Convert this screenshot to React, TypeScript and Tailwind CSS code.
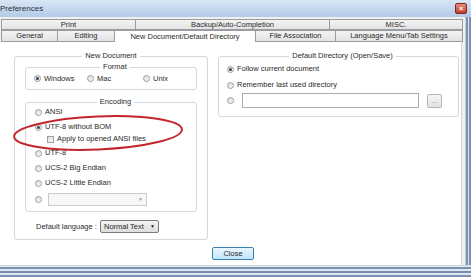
import type { ReactNode } from 'react';

const Radio = ({ checked }: { checked?: boolean }) => (
  <span className="w-[7px] h-[7px] rounded-full border border-[#9a9da1] bg-linear-to-br from-[#d8d8d8] to-[#fbfbfb] flex items-center justify-center shrink-0">
    {checked && <span className="w-[3px] h-[3px] rounded-full bg-[#34455a]" />}
  </span>
);

const Check = () => (
  <span className="w-[7px] h-[7px] border border-[#9a9da1] bg-linear-to-br from-[#dcdcdc] to-[#fbfbfb] shrink-0" />
);

function Group({ title, className, children }: { title: string; className?: string; children: ReactNode }) {
  return (
    <fieldset className={`border border-[#d3d8dd] rounded-[3px] ${className ?? ''}`}>
      <legend className="mx-auto px-[3px] leading-[8px]">{title}</legend>
      {children}
    </fieldset>
  );
}

function Tab({ label, w, active, first }: { label: string; w: string; active?: boolean; first?: boolean }) {
  return (
    <div
      className={`${w} ${first ? '' : '-ml-px'} h-full flex items-center justify-center border-t border-l border-r border-[#9a9ca2] ${
        active ? 'bg-white relative z-10' : 'bg-linear-to-b from-[#f3f3f3] to-[#e3e3e3] border-b'
      }`}
    >
      {label}
    </div>
  );
}

export default function App() {
  return (
    <div className="w-[471px] h-[277px] overflow-hidden relative flex flex-col bg-[#f0f0f0] text-[#2a2a2a] text-[7.5px] leading-none font-['Liberation_Sans',Arial,sans-serif]">
      {/* title bar */}
      <div className="h-[17px] shrink-0 flex items-center justify-between bg-linear-to-b from-[#d9e6f4] to-[#b3cbe7]">
        <span className="text-[8px] text-[#26303d]">Preferences</span>
        <span className="mr-[4px] w-[12px] h-[11px] rounded-[2px] border border-[#7b2a20] bg-linear-to-b from-[#e98a78] to-[#c23a26] flex items-center justify-center text-white text-[8px] font-bold">
          ×
        </span>
      </div>

      <div className="flex flex-1 min-h-0">
        <div className="w-[465px] flex flex-col pt-[2px]">
          {/* tabs */}
          <div className="h-[11px] flex pl-[1px]">
            <Tab first label="Print" w="w-[135px]" />
            <Tab label="Backup/Auto-Completion" w="w-[195px]" />
            <Tab label="MISC." w="w-[134px]" />
          </div>
          <div className="h-[12px] flex pl-[1px]">
            <Tab first label="General" w="w-[57px]" />
            <Tab label="Editing" w="w-[58px]" />
            <Tab active label="New Document/Default Directory" w="w-[142px]" />
            <Tab label="File Association" w="w-[81px]" />
            <Tab label="Language Menu/Tab Settings" w="w-[128px]" />
          </div>

          {/* page */}
          <div className="w-[462px] flex-1 bg-white border-r border-[#d4d6d9] flex flex-col pl-[14px] pt-[10px]">
            <div className="flex items-start gap-[10px]">
              <Group title="New Document" className="w-[194px] px-[10px] pb-[6px]">
                <Group title="Format" className="mt-[3px] pl-[8px] pb-[3px]">
                  <div className="h-[15px] flex items-center">
                    <label className="w-[53px] flex items-center gap-[3px]">
                      <Radio checked />
                      Windows
                    </label>
                    <label className="w-[56px] flex items-center gap-[3px]">
                      <Radio />
                      Mac
                    </label>
                    <label className="flex items-center gap-[3px]">
                      <Radio />
                      Unix
                    </label>
                  </div>
                </Group>

                <Group title="Encoding" className="mt-[8px] pl-[9px] pb-[5px]">
                  <div className="h-[12px] flex items-center gap-[3px]">
                    <Radio />
                    ANSI
                  </div>
                  <div className="mt-[3px] h-[12px] flex items-center gap-[3px]">
                    <Radio checked />
                    UTF-8 without BOM
                  </div>
                  <div className="h-[12px] flex items-center gap-[3px] pl-[12px]">
                    <Check />
                    Apply to opened ANSI files
                  </div>
                  <div className="mt-[2px] h-[12px] flex items-center gap-[3px]">
                    <Radio />
                    UTF-8
                  </div>
                  <div className="mt-[3px] h-[12px] flex items-center gap-[3px]">
                    <Radio />
                    UCS-2 Big Endian
                  </div>
                  <div className="mt-[3px] h-[12px] flex items-center gap-[3px]">
                    <Radio />
                    UCS-2 Little Endian
                  </div>
                  <div className="mt-[4px] h-[13px] flex items-center gap-[6px]">
                    <Radio />
                    <div className="w-[99px] h-[13px] border border-[#c9cbcf] bg-[#f7f7f7] flex items-center justify-end pr-[3px]">
                      <span className="text-[5px] text-[#a0a0a0]">▼</span>
                    </div>
                  </div>
                </Group>

                <div className="mt-[8px] h-[13px] flex items-center pl-[11px]">
                  <span className="w-[64px]">Default language :</span>
                  <div className="w-[59px] h-[13px] rounded-[2px] border border-[#7a7a7a] bg-linear-to-b from-[#f3f3f3] to-[#dddddd] flex items-center justify-between px-[3px]">
                    <span>Normal Text</span>
                    <span className="text-[5px] text-[#222]">▼</span>
                  </div>
                </div>
              </Group>

              <Group title="Default Directory (Open/Save)" className="w-[241px] pl-[8px] pb-[8px]">
                <div className="mt-[3px] h-[12px] flex items-center gap-[3px]">
                  <Radio checked />
                  Follow current document
                </div>
                <div className="mt-[4px] h-[12px] flex items-center gap-[3px]">
                  <Radio />
                  Remember last used directory
                </div>
                <div className="mt-[2px] h-[15px] flex items-center">
                  <Radio />
                  <div className="ml-[8px] w-[177px] h-[15px] border border-[#abadb3] bg-white" />
                  <div className="ml-[8px] w-[15px] h-[14px] border border-[#b5b5b5] rounded-[2px] bg-linear-to-b from-[#f6f6f6] to-[#e2e2e2] flex items-center justify-center text-[#8a8a8a]">
                    ...
                  </div>
                </div>
              </Group>
            </div>

            <div className="mt-[7px] ml-[198px] w-[42px] h-[13px] rounded-[2px] border border-[#3c7fb1] bg-linear-to-b from-[#eaf6fd] to-[#bee6fd] flex items-center justify-center">
              Close
            </div>
          </div>
        </div>

        {/* right window frame */}
        <div className="w-[6px] flex">
          <div className="w-[1px] bg-[#c8d2de]" />
          <div className="w-[2px] bg-[#7b8fb1]" />
          <div className="w-[1px] bg-[#dfe6ef]" />
          <div className="w-[2px] bg-[#7b8fb1]" />
        </div>
      </div>

      {/* bottom window frame */}
      <div className="h-[12px] shrink-0 flex flex-col">
        <div className="h-[1px] bg-[#c8d2de]" />
        <div className="h-[1px] bg-[#e9eef4]" />
        <div className="h-[2px] bg-[#7b8fb1]" />
        <div className="h-[2px] bg-[#dfe6ef]" />
        <div className="h-[2px] bg-[#7b8fb1]" />
        <div className="h-[2px] bg-[#dfe6ef]" />
        <div className="h-[2px] bg-[#7b8fb1]" />
      </div>

      {/* red annotation ellipse */}
      <svg className="absolute left-[10px] top-[112px]" width="178" height="42" viewBox="0 0 178 42">
        <ellipse cx="88" cy="21" rx="84" ry="16.5" fill="none" stroke="#c4252d" strokeWidth="2" transform="rotate(-2.5 88 21)" />
      </svg>
    </div>
  );
}
